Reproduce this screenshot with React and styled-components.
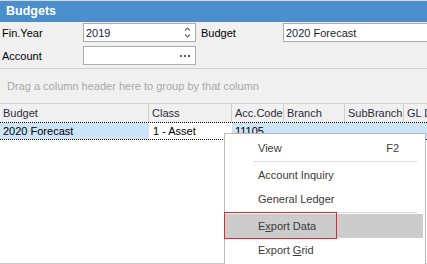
import React from "react";
import styled, { createGlobalStyle } from "styled-components";

const GlobalStyle = createGlobalStyle`
  html, body {
    margin: 0;
    padding: 0;
    background: #ffffff;
  }
  body {
    font-family: "Liberation Sans", Arial, sans-serif;
    font-size: 11px;
  }
`;

const columns = [
  { key: "budget", label: "Budget", width: 149 },
  { key: "class", label: "Class", width: 83 },
  { key: "code", label: "Acc.Code", width: 52 },
  { key: "branch", label: "Branch", width: 61 },
  { key: "sub", label: "SubBranch", width: 59 },
  { key: "gl", label: "GL Description", width: 80 },
];

const row = {
  budget: "2020 Forecast",
  class: "1 - Asset",
  code: "11105",
  branch: "",
  sub: "",
  gl: "",
};

const menuItems = [
  { label: "View", shortcut: "F2" },
  { separator: true },
  { label: "Account Inquiry" },
  { label: "General Ledger" },
  { separator: true },
  { label: "Export Data", mnemonic: 1, active: true },
  { label: "Export Grid", mnemonic: 7 },
];

function Mnemonic({ text, index }) {
  if (index === undefined) return text;
  return (
    <>
      {text.slice(0, index)}
      <u>{text[index]}</u>
      {text.slice(index + 1)}
    </>
  );
}

function Spinner() {
  return (
    <svg width="7" height="13" viewBox="0 0 7 13">
      <path d="M1 4.5 L3.5 2 L6 4.5" fill="none" stroke="#6a6a6a" strokeWidth="1.2" />
      <path d="M1 8.5 L3.5 11 L6 8.5" fill="none" stroke="#6a6a6a" strokeWidth="1.2" />
    </svg>
  );
}

function App() {
  return (
    <>
      <GlobalStyle />
      <Window>
        <TitleBar>Budgets</TitleBar>
        <Form>
          <Label>Fin.Year</Label>
          <Input>
            <span>2019</span>
            <Spinner />
          </Input>
          <Label indent>Budget</Label>
          <Input wide>
            <span>2020 Forecast</span>
          </Input>
          <Label>Account</Label>
          <Input>
            <span></span>
            <Dots>
              <i />
              <i />
              <i />
            </Dots>
          </Input>
        </Form>
        <GroupPanel>Drag a column header here to group by that column</GroupPanel>
        <Grid>
          <HeaderRow>
            {columns.map((c) => (
              <HeaderCell key={c.key} style={{ width: c.width }}>
                {c.label}
              </HeaderCell>
            ))}
          </HeaderRow>
          <DataRow>
            {columns.map((c) => (
              <DataCell key={c.key} focused={c.key === "class"} style={{ width: c.width }}>
                {row[c.key]}
              </DataCell>
            ))}
          </DataRow>
          <GridBody />
        </Grid>

        <Menu>
          {menuItems.map((item, i) =>
            item.separator ? (
              <Separator key={i} />
            ) : (
              <MenuItem key={i} active={item.active}>
                <span>
                  <Mnemonic text={item.label} index={item.mnemonic} />
                </span>
                {item.shortcut && <Shortcut>{item.shortcut}</Shortcut>}
              </MenuItem>
            )
          )}
        </Menu>
        <Callout />
      </Window>
    </>
  );
}

const Window = styled.div`
  position: relative;
  width: 427px;
  height: 264px;
  overflow: hidden;
  background: #f0f0f0;
  border-top: 1px solid #d6d6d6;
  box-sizing: border-box;
  display: flex;
  flex-direction: column;
`;

const TitleBar = styled.div`
  height: 21px;
  line-height: 21px;
  padding-left: 6px;
  background: #4a8ecc;
  color: #ffffff;
  font-weight: bold;
  font-size: 12.5px;
  flex-shrink: 0;
`;

const Form = styled.div`
  display: grid;
  grid-template-columns: 83px 113px 87px 150px;
  grid-auto-rows: 19px;
  row-gap: 4px;
  padding: 1px 0 3px 0;
  border-bottom: 1px solid #cfcfcf;
  flex-shrink: 0;
`;

const Label = styled.div`
  display: flex;
  align-items: center;
  padding-left: ${(p) => (p.indent ? "5px" : "2px")};
  color: #000000;
`;

const Input = styled.div`
  display: flex;
  align-items: center;
  justify-content: space-between;
  box-sizing: border-box;
  border: 1px solid #acacac;
  background: #ffffff;
  padding: 0 4px 0 2px;
  color: #1b1b2f;
  ${(p) => p.wide && "border-right: none;"}
`;

const Dots = styled.div`
  display: flex;
  gap: 2px;
  padding-right: 1px;

  i {
    width: 2px;
    height: 2px;
    background: #5a5a5a;
  }
`;

const GroupPanel = styled.div`
  height: 34px;
  display: flex;
  align-items: center;
  padding-left: 7px;
  color: #a8a8a8;
  flex-shrink: 0;
`;

const Grid = styled.div`
  flex: 1;
  display: flex;
  flex-direction: column;
  border-left: 1px solid #cccccc;
  border-bottom: 1px solid #cccccc;
  background: #ffffff;
  margin-left: -1px;
  padding-left: 1px;
`;

const HeaderRow = styled.div`
  display: flex;
  height: 19px;
  box-sizing: border-box;
  border-top: 1px solid #cfcfcf;
  background: #f0f0f0;
  margin-left: -1px;
`;

const HeaderCell = styled.div`
  flex-shrink: 0;
  box-sizing: border-box;
  border-right: 1px solid #cfcfcf;
  padding-left: 3px;
  display: flex;
  align-items: center;
  white-space: nowrap;
  overflow: hidden;
  color: #2a2a3a;
  &:first-child {
    padding-left: 3px;
  }
`;

const DataRow = styled.div`
  display: flex;
  height: 18px;
  box-sizing: border-box;
  border-top: 1px dotted #000000;
  border-bottom: 1px dotted #000000;
  margin-left: -1px;
`;

const DataCell = styled.div`
  flex-shrink: 0;
  box-sizing: border-box;
  padding-left: ${(p) => (p.focused ? "4px" : "3px")};
  display: flex;
  align-items: center;
  white-space: nowrap;
  overflow: hidden;
  color: #000000;
  background: ${(p) => (p.focused ? "#ffffff" : "#cce4f7")};
  &:last-child {
    flex: 1;
  }
`;

const GridBody = styled.div`
  flex: 1;
  background: #ffffff;
`;

const Menu = styled.div`
  position: absolute;
  left: 224px;
  top: 132px;
  width: 202px;
  height: 132px;
  box-sizing: border-box;
  border: 1px solid #b9b9b9;
  background: #ffffff;
  padding: 2px 2px 2px 0;
  display: flex;
  flex-direction: column;
  color: #3a3a3a;
`;

const MenuItem = styled.div`
  height: 24px;
  flex-shrink: 0;
  display: flex;
  align-items: center;
  justify-content: space-between;
  padding: 0 24px 0 33px;
  background: ${(p) => (p.active ? "#cccccc" : "transparent")};

  u {
    text-decoration: underline;
    text-underline-offset: 1px;
  }
`;

const Shortcut = styled.span`
  color: #3a3a3a;
`;

const Separator = styled.div`
  height: 3px;
  flex-shrink: 0;
  display: flex;
  align-items: center;
  margin: 0 6px 0 29px;

  &::after {
    content: "";
    flex: 1;
    height: 1px;
    background: #d9d9d9;
  }
`;

const Callout = styled.div`
  position: absolute;
  left: 224px;
  top: 211px;
  width: 113px;
  height: 27px;
  box-sizing: border-box;
  border: 1px solid #e8242c;
  pointer-events: none;
`;

export default App;
